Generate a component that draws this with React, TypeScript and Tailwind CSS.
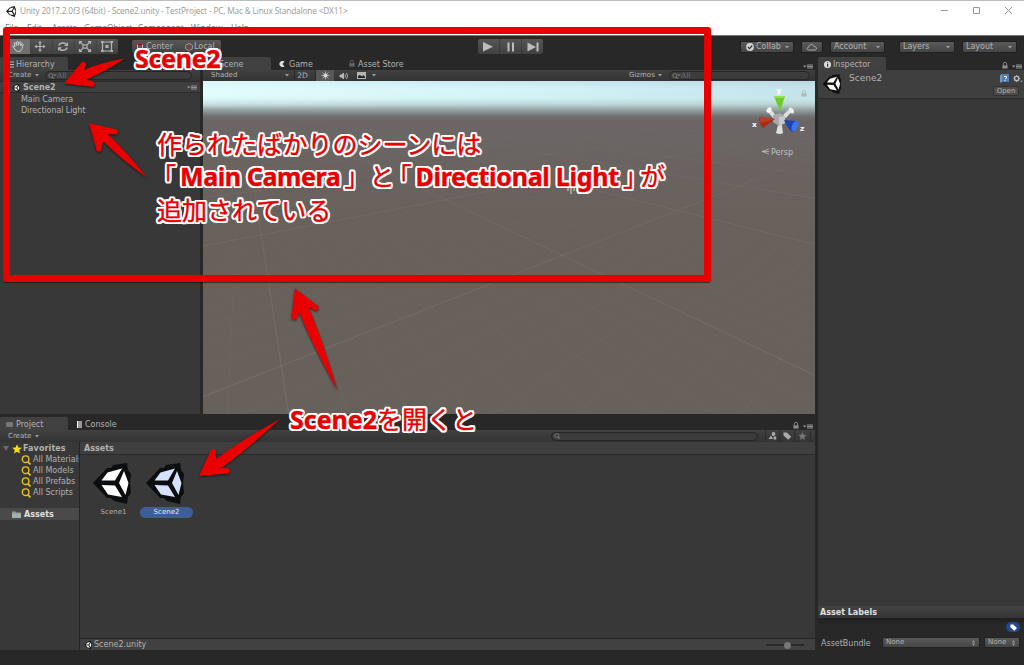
// App.tsx

import React from 'react'

interface ToolButtonProps {
  label: string
  className: string
  children?: React.ReactNode
}

interface ArrowProps {
  // tip, barb, notch, tail, notch, barb
  points: number[][]
}

const FAVORITES = ['All Materials', 'All Models', 'All Prefabs', 'All Scripts']

const ARROWS = [
  [[64, 83.5], [83.3, 64.5], [84, 70], [125, 58.3], [86, 79.5], [92, 84]],
  [[89, 123.3], [115.3, 131.7], [107.5, 134], [147, 177.8], [103, 141], [99, 149]],
  [[295, 288.3], [315.7, 307.7], [308.5, 307], [337.5, 390.3], [299, 312], [294.3, 317]],
  [[199, 476], [213.2, 451.7], [216, 459], [280.3, 418.7], [221, 468], [227, 470.8]],
]

function UnityLogo({ className, dark = '#0c0d0f', light = '#ffffff' }: { className: string, dark?: string, light?: string }) {
  return (
    <svg viewBox="0 0 38 41" className={className}>
      <path fill={dark} d="M0 20 14 5 18 5 20 2 34 0 35 7 38 11 37 20 38 30 35 34 34 41 21 38 18 35 14 35Z" />
      <path fill={light} d="M8.5 17.5 14.5 9.5 29 5.5 22 17.5ZM8.5 22 22 22.5 29 34 15 31.5ZM31 8 35.5 20 32.5 32 26 20Z" />
    </svg>
  )
}

function Caret({ className = '' }: { className?: string }) {
  return (
    <svg viewBox="0 0 4 3" className={`h-[3px] w-1 shrink-0 ${className}`}>
      <path d="M0 0h4L2 2.6Z" fill="#a0a0a0" />
    </svg>
  )
}

function PaneMenu({ className = '' }: { className?: string }) {
  return (
    <svg viewBox="0 0 10 5" className={`h-[5px] w-[10px] shrink-0 ${className}`}>
      <path d="M0 1.5h3.4L1.7 3.5Z" fill="#a0a0a0" />
      <path d="M4 .5h6v1H4zM4 2h6v1H4zM4 3.5h6v1H4z" fill="#929292" />
    </svg>
  )
}

function Lock({ className = '', color = '#8a8a8a' }: { className?: string, color?: string }) {
  return (
    <svg viewBox="0 0 6 7" className={`h-[7px] w-[6px] shrink-0 ${className}`}>
      <path d="M1.3 3.5V2a1.6 1.6 0 0 1 3.3 0v1.5" fill="none" stroke={color} strokeWidth=".9" />
      <path d="M.4 3.3h5.2V6.6H.4z" fill={color} />
    </svg>
  )
}

function Lens({ className = '', color = '#808080' }: { className?: string, color?: string }) {
  return (
    <svg viewBox="0 0 10 10" className={`shrink-0 ${className}`} fill="none" stroke={color} strokeWidth="1.4">
      <circle cx="4.6" cy="4.2" r="3.3" />
      <path d="m7 6.8 2.5 2.7" strokeWidth="1.7" />
    </svg>
  )
}

function DropButton({ label, className, children }: ToolButtonProps) {
  return (
    <div className={`flex h-3 items-center rounded-[2px] border border-[#1f1f1f] bg-gradient-to-b from-[#5a5a5a] to-[#454545] ${className}`}>
      {children}
      <span className="grow">{label}</span>
      {label && <Caret className="mr-1" />}
    </div>
  )
}

function Search({ className }: { className: string }) {
  return (
    <div className={`flex h-[9px] items-center rounded-full border border-[#252525] bg-[#3c3c3c] pl-[2px] text-[7.5px] text-[#6c6c6c] ${className}`}>
      <Lens className="h-[6px] w-[6px]" />
      <Caret className="-ml-px opacity-50" />
      All
    </div>
  )
}

function Arrow({ points }: ArrowProps) {
  const [tip, b1, n1, tail, n2, b2] = points
  const r = 2.7
  const edge = (b: number[], side: number) => {
    const dx = b[0] - tip[0]
    const dy = b[1] - tip[1]
    const len = Math.hypot(dx, dy)
    return [b[0] + (side * dy * r) / len, b[1] - (side * dx * r) / len]
  }
  // control point that bows a side of the shaft away from the other side
  const bow = (n: number[], other: number[]) => {
    const dx = n[0] - other[0]
    const dy = n[1] - other[1]
    const len = Math.hypot(dx, dy)
    return [n[0] * 0.6 + tail[0] * 0.4 + (dx * 2.4) / len, n[1] * 0.6 + tail[1] * 0.4 + (dy * 2.4) / len]
  }
  const cross = (b1[0] - tip[0]) * (tail[1] - tip[1]) - (b1[1] - tip[1]) * (tail[0] - tip[0])
  const s = cross > 0 ? 1 : -1
  const d = `M${tip} L${edge(b1, s)} L${edge(b1, -s)} L${n1} Q${bow(n1, n2)} ${tail} Q${bow(n2, n1)} ${n2} L${edge(b2, s)} L${edge(b2, -s)}Z`
  return (
    <g>
      <path d={d} />
      <circle cx={b1[0]} cy={b1[1]} r={r} />
      <circle cx={b2[0]} cy={b2[1]} r={r} />
    </g>
  )
}

function TitleBar() {
  return (
    <header className="h-[35px] shrink-0 border-t border-[#bdbdbd] bg-white">
      <div className="flex h-[20px] items-center pl-[6px] font-['Open_Sans',sans-serif] text-[8.3px] text-[#999]">
        <UnityLogo className="mr-1 h-[11px] w-[10px]" dark="#222" />
        <span className="w-[340px] whitespace-nowrap tracking-[-0.17px]">Unity 2017.2.0f3 (64bit) - Scene2.unity - TestProject - PC, Mac &amp; Linux Standalone &lt;DX11&gt;</span>
        <svg viewBox="0 0 72 10" className="ml-auto mr-[11px] h-[10px] w-[72px]" fill="none" stroke="#999" strokeWidth="1">
          <path d="M0 4.5h7M32.5 1.5h6v6h-6zM64 1l7 7M71 1l-7 7" />
        </svg>
      </div>
      <nav className="flex pl-[5px] pt-px font-['Open_Sans',sans-serif] text-[8.3px] leading-[12px] text-[#777]">
        <span className="w-[22px]">File</span>
        <span className="w-[25px]">Edit</span>
        <span className="w-8">Assets</span>
        <span className="w-[54px]">GameObject</span>
        <span className="w-[53px]">Component</span>
        <span className="w-10">Window</span>
        <span>Help</span>
      </nav>
    </header>
  )
}

function Toolbar() {
  return (
    <div className="flex h-[22px] shrink-0 items-start border-t border-[#777] bg-[#282828] pl-2 pt-[3px]">
      <div className="flex h-[15px] w-[110px] items-center rounded-[2px] bg-gradient-to-b from-[#555] to-[#414141]">
        <div className="h-full w-[22px] rounded-l-[2px] bg-[#6f6f6f]">
          <svg viewBox="0 0 22 15" className="h-[15px] w-[22px]" fill="none" stroke="#d0d0d0" strokeWidth="1" strokeLinecap="round">
            <path d="M7.5 11 4.8 7.6C4.5 6.5 5.8 6.5 7 8L6.3 4.3c0-1 1.2-1 1.5 0L8.7 6.5V3c.2-1 1.3-1 1.5 0L10.5 6.3 11.5 3.3c.4-.9 1.5-.6 1.4.3L12.6 7l1.3-2c.6-.7 1.4-.2 1.2.6L14 9.5C13.5 11 13 12.5 10.5 12.5 9 12.5 8.2 12 7.5 11Z" />
          </svg>
        </div>
        <svg viewBox="0 0 88 15" className="h-[15px] w-[88px]" fill="none" stroke="#b5b5b5" strokeWidth="1.2">
          <path d="M10 3.5v8M6 7.5h8" />
          <path d="m10 2 2 2.3H8zM10 13l2-2.3H8zM4.6 7.5l2.2-2v4zM15.4 7.5l-2.2-2v4z" fill="#b5b5b5" stroke="none" />
          <path d="M28.8 6.5a4.3 3.5 0 0 1 7.2-1.5M37.2 8.5a4.3 3.5 0 0 1-7.2 1.8" strokeWidth="1.5" />
          <path d="M38 3v4h-4zM28 12V8.3h4z" fill="#b5b5b5" stroke="none" />
          <path d="M53 5.8h4v3.4h-4zM49.5 2.5l3 2.8M60.5 2.5l-3 2.8M49.5 12.5l3-2.8M60.5 12.5l-3-2.8M49.5 5V2.5H52M58 2.5h2.5V5M49.5 10v2.5H52M58 12.5h2.5V10" />
          <path d="M72.5 3h9v9h-9z" />
          <path d="M71 2h2.5v2H71zM80.5 2H83v2h-2.5zM71 11h2.5v2H71zM80.5 11H83v2h-2.5zM75.5 6h3v3h-3z" fill="#b5b5b5" stroke="none" />
          <path d="M.3 0v15M22.3 0v15M44.3 0v15M66.3 0v15" stroke="#3a3a3a" strokeWidth=".6" />
        </svg>
      </div>
      <div className="ml-[14px] mt-px flex h-[13px] w-[89px] items-center rounded-[2px] bg-gradient-to-b from-[#575757] to-[#424242]">
        <span className="ml-[5px] mr-[3px] h-[6px] w-[6px] border border-[#bbb] border-t-red-800 bg-[#555]" />
        <span className="w-[31px]">Center</span>
        <svg viewBox="0 0 8 8" className="ml-2 mr-[1px] h-2 w-2" fill="none" stroke="#aaa" strokeWidth=".9">
          <path d="M4 .5 7.3 2.2v3.7L4 7.5.7 5.9V2.2Z" />
          <path d="M.7 2.2 4 4l3.3-1.8M4 4v3.5" stroke="#a33" />
        </svg>
        <span>Local</span>
      </div>
      <div className="ml-[257px] h-[15px] w-[65px] rounded-[2px] bg-gradient-to-b from-[#565656] to-[#414141]">
        <svg viewBox="0 0 65 15" className="h-[15px] w-[65px]" fill="#bdbdbd">
          <path d="M5 3v9.5l10-4.7ZM29.5 3.5h2v9h-2zM34 3.5h2v9h-2zM49.5 3.5v9l8.5-4.5ZM58.5 3.5h2v9h-2z" />
          <path d="M21.5 0h.6v15h-.6zM43.2 0h.6v15h-.6z" fill="#333" />
        </svg>
      </div>
      <div className="ml-auto mt-[2px] flex pr-[7px]">
        <DropButton label="Collab" className="w-[54px]">
          <svg viewBox="0 0 8 8" className="ml-[5px] mr-[2px] h-2 w-2 shrink-0">
            <circle cx="4" cy="4" r="3.9" fill="#d2d2d2" />
            <path d="m2 4 1.5 1.6L6.3 2.5" fill="none" stroke="#333" strokeWidth="1.2" />
          </svg>
        </DropButton>
        <DropButton label="" className="ml-[7px] w-[22px]">
          <svg viewBox="0 0 12 8" className="ml-1 h-2 w-3 shrink-0" fill="none" stroke="#b5b5b5" strokeWidth=".9">
            <path d="M2.5 7C.3 6.6.6 4.3 2.8 4.2 3 1 7.2.6 8 3.5c3-.2 3.2 3.2 1 3.5Z" />
          </svg>
        </DropButton>
        <DropButton label="Account" className="ml-[7px] w-[55px] pl-[3px]" />
        <DropButton label="Layers" className="ml-[14px] w-[56px] pl-[3px]" />
        <DropButton label="Layout" className="ml-[7px] w-[55px] pl-[3px]" />
      </div>
    </div>
  )
}

function Hierarchy() {
  return (
    <section className="flex w-[200px] flex-col">
      <div className="h-[13px] bg-[#282828]">
        <div className="flex h-full w-[68px] items-center rounded-t-[2px] bg-[#414141] pl-[9px] pt-[2px]">
          <svg viewBox="0 0 5 7" className="mr-[2px] h-[7px] w-[5px]">
            <path d="M0 .5h5v1H0zM0 3h5v1H0zM0 5.5h5v1H0z" fill="#bbb" />
          </svg>
          Hierarchy
        </div>
      </div>
      <div className="flex h-[11px] items-center bg-gradient-to-b from-[#414141] to-[#333] pl-2 text-[7px]">
        <span className="w-[27px]">Create</span>
        <Caret />
        <Search className="ml-[6px] w-[147px]" />
      </div>
      <div className="flex h-3 items-center border-y border-[#2b2b2b] bg-[#3f3f3f] pl-3 pr-[3px] pt-px font-bold">
        <UnityLogo className="mr-[3px] h-2 w-2" dark="#111" />
        <span className="grow">Scene2</span>
        <PaneMenu />
      </div>
      <ul className="grow bg-[#383838] pl-[21px] pt-px leading-[11px] tracking-[-0.08px]">
        <li>Main Camera</li>
        <li>Directional Light</li>
      </ul>
    </section>
  )
}

function SceneGrid() {
  // Each family of lines runs from its vanishing point through even steps on a ground row
  const lines: { x1: number, x2: number, major: boolean }[] = []
  for (let i = -30; i < 90; i++) {
    lines.push({ x1: 38, x2: 78 + i * 51, major: i % 10 === 0 })
  }
  for (let i = -20; i < 80; i++) {
    lines.push({ x1: 748, x2: 83 - i * 70, major: i % 10 === 0 })
  }
  const reach = 1.25
  return (
    <svg viewBox="0 0 612 333" className="h-full w-full" preserveAspectRatio="none">
      <defs>
        <linearGradient id="fade" x1="0" y1="0" x2="0" y2="1">
          <stop offset=".12" stopColor="#000" />
          <stop offset=".35" stopColor="#888" />
          <stop offset="1" stopColor="#fff" />
        </linearGradient>
        <mask id="depth" maskUnits="userSpaceOnUse" x="0" y="0" width="612" height="333">
          <rect width="612" height="333" fill="url(#fade)" />
        </mask>
      </defs>
      <g mask="url(#depth)" stroke="#8a9294">
        {lines.map((l, i) => (
          <line
            key={i}
            x1={l.x1}
            y1="22"
            x2={l.x1 + (l.x2 - l.x1) * reach}
            y2={22 + 261 * reach}
            strokeWidth={l.major ? 1 : 0.8}
            strokeOpacity={l.major ? 0.36 : 0.16}
          />
        ))}
      </g>
    </svg>
  )
}

function Gizmo() {
  return (
    <svg viewBox="0 0 60 76" className="absolute right-[5px] top-[5px] h-[76px] w-[60px]">
      <path d="m17 25 3-3 7 9-4 1ZM43 24l-3-2-8 8 4 2ZM26 47l2.5-10 3 0L33 47q-3 2-7 0Z" fill="#dedede" />
      <ellipse cx="19" cy="24" rx="2" ry="3" transform="rotate(35 19 24)" fill="#fff" />
      <ellipse cx="41.5" cy="24.5" rx="2" ry="3.3" transform="rotate(-35 41.5 24.5)" fill="#eee" />
      <path d="m23 29 7-2 5 3v7l-6 3-6-4Z" fill="#a9a9a9" />
      <path d="m29 31 6-1v7l-6 3Z" fill="#c9c9c9" />
      <path d="M24 10h11l-5 15.5Z" fill="#6ccc2a" />
      <path d="M24 10h11l-1 2h-9Z" fill="#8ee34f" />
      <path d="m9 31 16 2-12 9q-4-4-4-11Z" fill="#a72a19" />
      <path d="m9 31 16 2-14 4Z" fill="#c43a25" />
      <path d="m34 34 12 1-3 11q-5-2-9-12Z" fill="#1c43b4" />
      <ellipse cx="45" cy="40" rx="3" ry="5.5" transform="rotate(25 45 40)" fill="#3c74f2" />
      <g fill="#fff" fontFamily="DejaVu Sans" fontSize="7.5" fontWeight="bold">
        <text x="26.5" y="6.5">y</text>
        <text x="2" y="41">x</text>
        <text x="50" y="45">z</text>
      </g>
      <path d="m19 63-7 2.5 7 2.5M12 65.5h7" stroke="#bbb" strokeWidth=".8" fill="none" />
      <text x="21" y="68.5" fill="#c2c2c2" fontFamily="DejaVu Sans" fontSize="8">Persp</text>
    </svg>
  )
}

function SceneView() {
  return (
    <section className="flex w-[612px] flex-col">
      <div className="flex h-[13px] items-center bg-[#282828]">
        <span className="flex h-full w-[68px] items-center rounded-t-[2px] bg-[#414141] pl-[16px] pt-[2px]">Scene</span>
        <svg viewBox="0 0 6 6" className="ml-2 mr-1 mt-px h-[6px] w-[6px]">
          <path d="M5.5.8A3 3 0 1 0 5.5 5.2L3.4 3Z" fill="#ddd" />
        </svg>
        <span className="w-[60px] pt-[2px]">Game</span>
        <Lock className="mr-[3px]" color="#666" />
        <span className="grow pt-[2px]">Asset Store</span>
        <PaneMenu className="mr-[2px] mt-[5px]" />
      </div>
      <div className="flex h-[11px] items-center bg-gradient-to-b from-[#414141] to-[#333] pl-2 text-[7px]">
        <span className="w-[74px]">Shaded</span>
        <Caret />
        <span className="ml-[5px] flex h-full w-[22px] items-center justify-center border-x border-[#2a2a2a] pr-[5px] text-[7.5px]">2D</span>
        <span className="flex h-full w-[18px] items-center justify-center bg-[#585858]">
          <svg viewBox="0 0 10 10" className="h-[9px] w-[9px]" stroke="#d8d8d8" strokeWidth=".7">
            <circle cx="5" cy="5" r="1.9" fill="#e5e5e5" />
            <path d="M5 .5v9M.5 5h9M1.8 1.8l6.4 6.4M8.2 1.8 1.8 8.2" />
          </svg>
        </span>
        <svg viewBox="0 0 10 8" className="ml-[5px] h-2 w-[10px]" fill="none" stroke="#bbb" strokeWidth=".9">
          <path d="M1 3h1.5L4.5 1v6L2.5 5H1Z" fill="#bbb" />
          <path d="M6 2.5q1 1.5 0 3M7.5 1q2.2 3 0 6" />
        </svg>
        <svg viewBox="0 0 9 7" className="ml-2 mr-[6px] h-[7px] w-[9px]">
          <path d="M0 0h9v7H0z" fill="#b5b5b5" />
          <path d="M1 6V4l2-1 2 1.5L6.5 3 8 5v1Z" fill="#222" />
        </svg>
        <Caret />
        <span className="ml-auto w-[29px]">Gizmos</span>
        <Caret />
        <Search className="ml-[7px] mr-[5px] w-[141px]" />
      </div>
      <div className="relative grow bg-[linear-gradient(to_bottom,#c6e4ee_0px,#d5f6fa_8px,#d3f3f4_17px,#bfd8d9_23px,#94a2a2_29px,#717272_35px,#6b6766_39px,#69625e_90px,#67605b_160px)]">
        <div className="absolute inset-x-0 top-0 h-7 bg-[linear-gradient(to_right,rgba(230,255,255,0.7),rgba(215,245,250,0.1)_50%,rgba(165,195,210,0.35))] [mask-image:linear-gradient(#000_50%,transparent)]" />
        <SceneGrid />
        <Gizmo />
        <Lock className="absolute right-[8px] top-[9px]" color="#b0babb" />
        <svg viewBox="0 0 10 16" className="absolute left-[363px] top-[97px] h-4 w-[10px]" stroke="#e8dfb4" strokeWidth="1">
          <path d="M5 0v16M2 10v3M8 10v3" />
        </svg>
      </div>
    </section>
  )
}

function Project() {
  return (
    <section className="flex h-[233px] flex-col">
      <div className="flex h-[13px] items-center bg-[#282828]">
        <div className="flex h-full w-[68px] items-center rounded-t-[2px] bg-[#414141] pl-[6px] pt-[2px]">
          <span className="mr-[3px] h-[5px] w-[7px] rounded-[1px] bg-[#777]" />
          Project
        </div>
        <span className="ml-[9px] mr-[3px] mt-px h-[7px] w-[5px] border-l border-white bg-[#999]" />
        <span className="grow pt-[2px]">Console</span>
        <Lock className="mr-1 mt-1" />
        <PaneMenu className="mr-[2px] mt-[5px]" />
      </div>
      <div className="flex h-3 items-center bg-gradient-to-b from-[#414141] to-[#333] pl-2 text-[7px]">
        <span className="w-[27px] pt-px">Create</span>
        <Caret />
        <div className="ml-auto flex h-[9px] w-[207px] items-center rounded-full border border-[#252525] bg-[#3c3c3c] pl-[2px]">
          <Lens className="h-[6px] w-[6px]" />
        </div>
        <svg viewBox="0 0 50 12" className="ml-[7px] h-3 w-[50px]" fill="#aaa">
          <path d="M0 0h.7v12H0zM14.5 0h.7v12h-.7zM29.5 0h.7v12h-.7zM45 0h.7v12H45z" fill="#272727" />
          <path d="m3.5 9 2.5-3.5L8 9Z" />
          <circle cx="8.5" cy="4" r="1.9" />
          <path d="M8.5 6.5h2.7v3H8.500z" />
          <path d="M18.5 2.5h3.3l4.4 4.2-2.9 3-4.8-4.2Z" />
          <path d="m37.5 2 1.2 2.7 2.9.3-2.2 2 .6 2.9-2.5-1.5L35 9.9l.6-2.9-2.2-2 2.9-.3Z" fill="#777" />
        </svg>
      </div>
      <div className="flex grow">
        <aside className="w-[79px] overflow-hidden bg-[#383838] leading-[11px]">
          <div className="flex h-3 items-center pl-[3px] pt-px font-bold">
            <svg viewBox="0 0 6 5" className="mr-[3px] h-[5px] w-[6px]">
              <path d="M0 0h6L3 5Z" fill="#6b6b6b" />
            </svg>
            <svg viewBox="0 0 10 10" className="mr-px h-[10px] w-[10px]">
              <path d="m5 .3 1.400 3.200 3.500.3-2.700 2.300.8 3.500-3-1.900-3 1.900.8-3.500L.1 3.800l3.500-.3Z" fill="#ffd91f" />
            </svg>
            <span className="tracking-[0.1px]">Favorites</span>
          </div>
          {FAVORITES.map((name) => (
            <div key={name} className="flex h-[11px] items-center whitespace-nowrap pl-[21px]">
              <Lens className="mr-[2px] h-[10px] w-[10px]" color="#e8c11c" />
              {name}
            </div>
          ))}
          <div className="mt-[10px] flex h-3 items-center bg-[#4a4a4a] pl-3 pt-px font-bold text-[#e0e0e0]">
            <svg viewBox="0 0 9 7" className="mr-[3px] h-[7px] w-[9px]">
              <path d="M0 .5h3.5l1 1H9V7H0z" fill="#8b9896" />
              <path d="M0 2.5h9V7H0z" fill="#a5b0ae" />
            </svg>
            Assets
          </div>
        </aside>
        <div className="flex grow flex-col border-l border-[#242424] bg-[#383838]">
          <div className="flex h-[13px] items-center border-b border-[#2a2a2a] bg-[#3f3f3f] pl-[4px] pt-px font-bold">Assets</div>
          <div className="flex grow items-start pl-[7px] pt-2 text-[7px]">
            <div className="flex w-[53px] flex-col items-center">
              <UnityLogo className="mr-[3px] h-[41px] w-[38px]" />
              <span className="mt-[3px] flex h-[11px] items-center">Scene1</span>
            </div>
            <div className="flex w-[53px] flex-col items-center">
              <UnityLogo className="mr-[3px] h-[41px] w-[38px]" light="#d6e2fb" />
              <span className="mt-[3px] flex h-[11px] w-[53px] items-center justify-center rounded-full bg-[#3e5f96] text-[#e4e9f2]">Scene2</span>
            </div>
          </div>
          <div className="flex h-3 items-center border-t border-[#242424] bg-[#414141] pl-[4px] pt-px">
            <UnityLogo className="mr-[2px] h-2 w-2" dark="#111" />
            <span className="grow">Scene2.unity</span>
            <div className="mr-[11px] flex h-[2px] w-[38px] items-center bg-[#2a2a2a]">
              <span className="ml-[18px] h-[7px] w-[7px] rounded-full bg-[#777]" />
            </div>
          </div>
        </div>
      </div>
    </section>
  )
}

function NoneSelect({ className }: { className: string }) {
  return (
    <div className={`flex h-[11px] items-center rounded-[2px] border border-[#222] bg-gradient-to-b from-[#595959] to-[#464646] pl-[3px] pr-1 text-[7px] ${className}`}>
      <span className="grow">None</span>
      <svg viewBox="0 0 3 6" className="h-[6px] w-[3px]">
        <path d="M0 2.5h3L1.5 0ZM0 3.5h3L1.5 6Z" fill="#999" />
      </svg>
    </div>
  )
}

function Inspector() {
  return (
    <section className="flex w-[206px] flex-col">
      <div className="flex h-[13px] items-center bg-[#282828]">
        <div className="flex h-full w-[68px] items-center rounded-t-[2px] bg-[#414141] pl-[6px] pt-[2px]">
          <svg viewBox="0 0 7 7" className="mr-[2px] h-[7px] w-[7px]">
            <circle cx="3.5" cy="3.5" r="3.5" fill="#ddd" />
            <path d="M3 1.2h1.2v1.1H3zM3 3h1.2v2.8H3z" fill="#333" />
          </svg>
          Inspector
        </div>
        <Lock className="ml-auto mr-1 mt-1" />
        <PaneMenu className="mr-[2px] mt-[5px]" />
      </div>
      <div className="flex h-[29px] border-b border-[#2a2a2a] bg-[#3f3f3f] pl-[4px] pt-1">
        <UnityLogo className="h-5 w-[20px]" dark="#111" />
        <span className="ml-[7px] grow text-[9px] leading-[9px]">Scene2</span>
        <div className="flex w-[31px] flex-col">
          <div className="flex h-[9px] items-center pl-[7px]">
            <svg viewBox="0 0 9 9" className="mr-1 h-[9px] w-[9px]">
              <path d="M0 1.5 2 0v8L0 9Z" fill="#7a94b6" />
              <path d="M2 0h7v8H2z" fill="#4f7fb9" />
              <path d="M4 2.5h2.5v1.7L5 5M5 6v1" stroke="#fff" fill="none" />
            </svg>
            <svg viewBox="0 0 11 9" className="h-2 w-[10px]">
              <circle cx="4" cy="4" r="2.4" fill="none" stroke="#bbb" strokeWidth="1.5" />
              <path d="M4 0v1.5M4 6.5V8M0 4h1.5M6.5 4H8M1.2 1.2l1 1M5.8 5.8l1 1M6.8 1.2l-1 1M1.2 6.8l1-1" stroke="#bbb" />
              <path d="M8 6.5h2.5L9.2 8.2Z" fill="#bbb" />
            </svg>
          </div>
          <span className="mt-[3px] flex h-[10px] w-[26px] items-center justify-center rounded-[2px] border border-[#303030] bg-[#4d4d4d] text-[7px]">Open</span>
        </div>
      </div>
      <div className="grow bg-[#383838]" />
      <div className="flex h-3 items-center bg-gradient-to-b from-[#434343] to-[#353535] pl-[2px] pt-px font-bold text-[#e0e0e0]">Asset Labels</div>
      <div className="flex h-8 flex-col bg-gradient-to-b from-[#1f1f1f] to-[#282828] to-20% pt-[4px]">
        <div className="mr-1 flex h-[10px] w-[14px] items-center justify-center self-end rounded-full bg-[#24498a]">
          <svg viewBox="0 0 8 8" className="h-[7px] w-[7px]">
            <path d="M.5.5h3.3L8 4.7 4.9 7.7.5 3.7Z" fill="#fff" />
          </svg>
        </div>
        <div className="mt-[5px] flex items-center pl-[3px]">
          <span className="w-[61px] pt-[2px]">AssetBundle</span>
          <NoneSelect className="w-[98px]" />
          <NoneSelect className="ml-1 w-[36px]" />
        </div>
      </div>
    </section>
  )
}

function Callouts() {
  return (
    <div className="pointer-events-none absolute inset-0">
      <div className="absolute left-[3px] top-[27px] h-[255px] w-[708px] rounded-[3px] border-[7px] border-[#e60000] shadow-[0_1px_1px_rgba(0,0,0,0.5)]" />
      <svg viewBox="0 0 1024 665" className="absolute inset-0 h-full w-full drop-shadow-[0_1px_1px_rgba(0,0,0,0.6)]" fill="#ea0000">
        {ARROWS.map((points, i) => (
          <Arrow key={i} points={points} />
        ))}
      </svg>
      <div className="whitespace-nowrap font-['Noto_Sans','Noto_Sans_CJK_JP',sans-serif] text-[25px] leading-[33px] text-[#e60000] [-webkit-text-stroke:0.4px_#e60000] [text-shadow:2.2px_0_#fff,-2.2px_0_#fff,0_2.2px_#fff,0_-2.2px_#fff,1.6px_1.6px_#fff,-1.6px_1.6px_#fff,1.6px_-1.6px_#fff,-1.6px_-1.6px_#fff,2px_0.9px_#fff,-2px_0.9px_#fff,2px_-0.9px_#fff,-2px_-0.9px_#fff,0.9px_2px_#fff,-0.9px_2px_#fff,0.9px_-2px_#fff,-0.9px_-2px_#fff]">
        <p className="absolute left-[135px] top-[42px] font-bold tracking-[-0.3px]">Scene2</p>
        <div className="absolute left-[157px] top-[128px]">
          <p>作られたばかりのシーンには</p>
          <p className="-mt-px mb-px">
            <span className="-ml-[6px] mr-1">「</span>
            <b className="mr-1 tracking-[-0.4px]">Main Camera</b>
            <span className="-mr-[2px]">」と</span>
            <span className="-ml-[6px] mr-1">「</span>
            <b className="mr-1 tracking-[-0.25px]">Directional Light</b>
            <span>」</span>
            <span className="-ml-[8px]">が</span>
          </p>
          <p>追加されている</p>
        </div>
        <p className="absolute left-[290px] top-[403px]"><b>Scene2</b>を開くと</p>
      </div>
    </div>
  )
}

export default function App() {
  return (
    <div className="relative flex h-[665px] w-[1024px] flex-col overflow-hidden bg-[#282828] font-['DejaVu_Sans',sans-serif] text-[8px] leading-none text-[#b2b2b2]">
      <TitleBar />
      <Toolbar />
      <main className="flex h-[593px] gap-[3px]">
        <div className="flex w-[815px] flex-col gap-[3px]">
          <div className="flex grow gap-[3px]">
            <Hierarchy />
            <SceneView />
          </div>
          <Project />
        </div>
        <Inspector />
      </main>
      <Callouts />
    </div>
  )
}
